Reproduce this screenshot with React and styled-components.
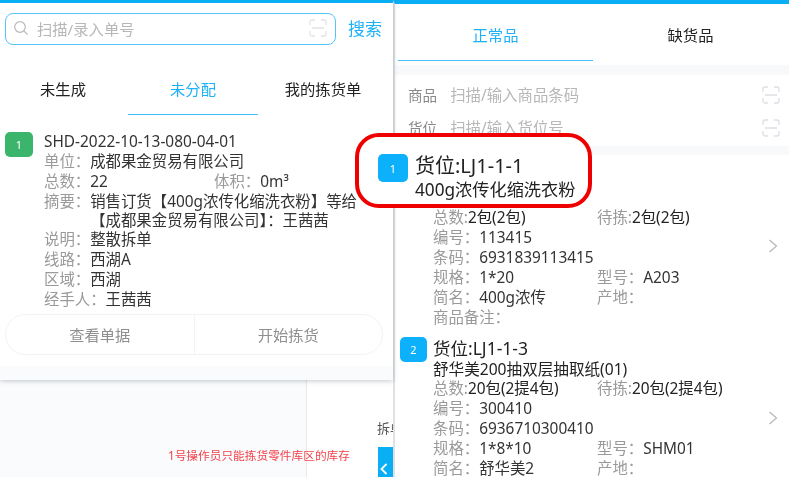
import React from "react";
import styled, { createGlobalStyle } from "styled-components";

const Global = createGlobalStyle`
  html, body { margin: 0; padding: 0; background: #fff; }
  body { font-family: "Noto Sans", "Noto Sans CJK SC", sans-serif; }
  * { box-sizing: border-box; }
`;

const Page = styled.div`
  position: relative;
  width: 789px;
  height: 477px;
  overflow: hidden;
  display: flex;
  background: #fff;
  filter: blur(0.35px);
`;
const LeftColumn = styled.div`
  width: 393px;
  flex: none;
  display: flex;
  flex-direction: column;
`;
const LeftPanel = styled.div`
  height: 380px;
  flex: none;
  display: flex;
  flex-direction: column;
  background: #fff;
  border-top: 3px solid #0aaef5;
  box-shadow: 0 1px 5px rgba(90, 100, 110, .35);
  position: relative;
  z-index: 1;
`;
const SearchBar = styled.div`
  display: flex;
  align-items: center;
  padding: 10px 0 0 5px;
  gap: 12px;
  flex: none;
`;
const SearchField = styled.div`
  width: 331px;
  height: 32px;
  border: 1.5px solid #55c4fb;
  border-radius: 8px;
  display: flex;
  align-items: center;
  padding: 0 8px 2px 7px;
  gap: 8px;
  color: #b7b7b7;
  font-size: 15.3px;
`;
const Grow = styled.span`
  flex: 1;
`;
const SearchAction = styled.span`
  color: #1fb1f8;
  font-size: 17px;
  line-height: 30px;
`;
const Tabs = styled.div`
  display: flex;
  flex: none;
  height: ${p => p.$h}px;
  margin: ${p => p.$m};
`;
const Tab = styled.div`
  flex: 0 0 ${p => p.$w}px;
  display: flex;
  align-items: center;
  justify-content: center;
  font-size: 15.3px;
  padding-top: ${p => p.$pt || 0}px;
  color: ${p => (p.$on ? "#1fb1f8" : "#222")};
  border-bottom: 1px solid ${p => (p.$on ? "#45bdf8" : "transparent")};
`;
const Order = styled.div`
  display: flex;
  flex: none;
  padding: 17px 0 0 5px;
  gap: 11px;
`;
const Badge = styled.div`
  flex: none;
  width: ${p => p.$w}px;
  height: ${p => p.$h}px;
  border-radius: 5px;
  background: ${p => p.$c};
  color: #fff;
  font-size: 11px;
  display: flex;
  align-items: center;
  justify-content: center;
`;
const OrderBody = styled.div`
  flex: 1;
`;
const Line = styled.div`
  display: flex;
  font-size: 15.4px;
  line-height: 20px;
  height: ${p => p.$tall ? "auto" : "20px"};
  color: #333;
  white-space: nowrap;
`;
const Label = styled.span`
  color: #9a9a9a;
  white-space: pre;
`;
const Cell = styled.div`
  width: ${p => p.$w}px;
  flex: none;
  white-space: pre;
`;
const Wrapped = styled.div`
  line-height: 19px;
`;
const Actions = styled.div`
  margin: 4px 10px 0 5px;
  height: 41px;
  flex: none;
  display: flex;
  border: 1px solid #f1f3f4;
  border-radius: 21px;
`;
const Action = styled.div`
  flex: 1;
  display: flex;
  align-items: center;
  justify-content: center;
  padding-bottom: 2px;
  color: #8f8f8f;
  font-size: 15.3px;
  & + & { border-left: 1px solid #f1f3f4; }
`;
const PanelBand = styled.div`
  margin-top: auto;
  height: 14px;
  background: #fafbfc;
`;
const Backdrop = styled.div`
  flex: 1;
  display: flex;
  background: #fff;
  min-height: 0;
`;
const BackdropMain = styled.div`
  width: 307px;
  flex: none;
  background: #fafbfd;
  border-right: 1px solid #e6e8ec;
`;
const BackdropSide = styled.div`
  flex: 1;
  padding: 40px 0 0 70px;
  font-size: 13px;
  line-height: 16px;
  color: #555;
  white-space: nowrap;
  overflow: hidden;
`;
const BackTab = styled.div`
  margin: 11px 0 0 1px;
  height: 30px;
  width: 16px;
  background: #0aaef5;
  padding: 15px 0 0 2px;
`;
const Note = styled.div`
  position: absolute;
  left: 168px;
  top: 448px;
  font-size: 11.7px;
  line-height: 14px;
  color: #f2444b;
  z-index: 2;
`;
const RightPanel = styled.div`
  flex: 1;
  display: flex;
  flex-direction: column;
  border-top: 4px solid #0aaef5;
  border-left: 2px solid #dfe1e4;
  position: relative;
  overflow: hidden;
  background: #fff;
`;
const Band = styled.div`
  height: ${p => p.$h}px;
  margin: ${p => p.$m};
  background: #f8f9fa;
  flex: none;
`;
const InputRow = styled.div`
  display: flex;
  flex: none;
  align-items: center;
  height: 33px;
  padding: 0 9px 0 13px;
  font-size: 15.4px;
  color: #b7b7b7;
  gap: 13px;
`;
const RowLabel = styled.span`
  color: #8a8a8a;
  font-size: 14.6px;
`;
const Goods = styled.div`
  padding: ${p => p.$pad};
  position: relative;
  display: flex;
  flex: none;
  gap: 6px;
`;
const GoodsBody = styled.div`
  flex: 1;
`;
const Title = styled.div`
  font-size: 17.5px;
  line-height: 22px;
  color: #222;
`;
const Sub = styled.div`
  font-size: 15.6px;
  line-height: 20px;
  color: #222;
`;
const Strong = styled.span`
  color: #222;
`;
const Chevron = styled.svg`
  position: absolute;
  right: 11px;
  top: ${p => p.$top}px;
`;
const Callout = styled.div`
  position: absolute;
  left: 355px;
  top: 133px;
  width: 237px;
  height: 75px;
  border: 4px solid #ef0000;
  border-radius: 24px;
  background: #fff;
  z-index: 3;
  display: flex;
  padding: 17px 0 0 19px;
  gap: 7px;
`;
const CalloutTitle = styled.div`
  font-size: 20px;
  line-height: 24px;
  color: #222;
`;
const CalloutSub = styled.div`
  font-size: 17.2px;
  line-height: 24px;
  color: #222;
  white-space: nowrap;
`;

const Search = () => (
  <svg width="16" height="16" viewBox="0 0 16 16" fill="none" stroke="#b9b9b9" strokeWidth="1.2">
    <circle cx="7" cy="7" r="5.3" />
    <path d="M11 11l3.6 3.6" />
  </svg>
);
const Scan = ({ c = "#dcdfe6" }) => (
  <svg width="18" height="18" viewBox="0 0 18 18" fill="none" stroke={c} strokeWidth="1.3">
    <path d="M1 6V3a2 2 0 0 1 2-2h3M12 1h3a2 2 0 0 1 2 2v3M17 12v3a2 2 0 0 1-2 2h-3M6 17H3a2 2 0 0 1-2-2v-3M3 9h12" />
  </svg>
);
const Arrow = ({ top }) => (
  <Chevron $top={top} width="10" height="14" viewBox="0 0 10 14" fill="none" stroke="#b5b5b5" strokeWidth="1.2">
    <path d="M1.5 1l7 6-7 6" />
  </Chevron>
);

const goods = [
  {
    n: 2, loc: "货位:LJ1-1-3", name: "舒华美200抽双层抽取纸(01)", total: "20包(2提4包)", wait: "20包(2提4包)",
    code: "300410", bar: "6936710300410", spec: "1*8*10", model: "SHM01", short: "舒华美2",
  },
];

export default function App() {
  return (
    <Page>
      <Global />
      <LeftColumn>
        <LeftPanel>
          <SearchBar>
            <SearchField>
              <Search />
              <Grow>扫描/录入单号</Grow>
              <Scan c="#e2e4e8" />
            </SearchField>
            <SearchAction>搜索</SearchAction>
          </SearchBar>
          <Tabs $h={70} $m="0 0 0 -2px">
            <Tab $w={130} $pt={16}>未生成</Tab>
            <Tab $w={130} $pt={16} $on>未分配</Tab>
            <Tab $w={130} $pt={16}>我的拣货单</Tab>
          </Tabs>
          <Order>
            <Badge $w={28} $h={25} $c="#3cb56c">1</Badge>
            <OrderBody>
              <Line>SHD-2022-10-13-080-04-01</Line>
              <Line><Label>单位：</Label>成都果金贸易有限公司</Line>
              <Line><Cell $w={170}><Label>总数：</Label>22</Cell><Label>体积：</Label>0m³</Line>
              <Line $tall>
                <Label>摘要：</Label>
                <Wrapped>
                  <div>销售订货【400g浓传化缩洗衣粉】等给</div>
                  <div>【成都果金贸易有限公司】：王茜茜</div>
                </Wrapped>
              </Line>
              <Line><Label>说明：</Label>整散拆单</Line>
              <Line><Label>线路：</Label>西湖A</Line>
              <Line><Label>区域：</Label>西湖</Line>
              <Line><Label>经手人：</Label>王茜茜</Line>
            </OrderBody>
          </Order>
          <Actions>
            <Action>查看单据</Action>
            <Action>开始拣货</Action>
          </Actions>
          <PanelBand />
        </LeftPanel>
        <Backdrop>
          <BackdropMain />
          <BackdropSide>
            拆单
            <BackTab>
              <svg width="8" height="12" viewBox="0 0 8 12" fill="none" stroke="#fff" strokeWidth="1.8">
                <path d="M6.5 1L1.5 6l5 5" />
              </svg>
            </BackTab>
          </BackdropSide>
        </Backdrop>
      </LeftColumn>
      <Note>1号操作员只能拣货零件库区的库存</Note>
      <RightPanel>
        <Tabs $h={57} $m="0 0 0 3px">
          <Tab $w={195} $pt={4} $on>正常品</Tab>
          <Tab $w={195} $pt={4}>缺货品</Tab>
        </Tabs>
        <Band $h={10} $m="4px 0 3px" />
        <InputRow><RowLabel>商品</RowLabel><Grow>扫描/输入商品条码</Grow><Scan /></InputRow>
        <InputRow><RowLabel>货位</RowLabel><Grow>扫描/输入货位号</Grow><Scan /></InputRow>
        <Band $h={9} $m="2px 0 0" />
        <Goods $pad="53px 0 0 38px">
          <GoodsBody>
            <Line><Cell $w={164}><Label>总数:</Label><Strong>2包(2包)</Strong></Cell><Label>待拣:</Label><Strong>2包(2包)</Strong></Line>
            <Line><Label>编号：</Label>113415</Line>
            <Line><Label>条码：</Label>6931839113415</Line>
            <Line><Cell $w={164}><Label>规格：</Label>1*20</Cell><Label>型号：</Label>A203</Line>
            <Line><Cell $w={164}><Label>简名：</Label>400g浓传</Cell><Label>产地：</Label></Line>
            <Line><Label>商品备注：</Label></Line>
          </GoodsBody>
          <Arrow top={84} />
        </Goods>
        {goods.map(g => (
          <Goods key={g.n} $pad="9px 0 0 5px">
            <Badge $w={27} $h={25} $c="#0db0fb">{g.n}</Badge>
            <GoodsBody>
              <Title>{g.loc}</Title>
              <Sub>{g.name}</Sub>
              <Line><Cell $w={164}><Label>总数:</Label><Strong>{g.total}</Strong></Cell><Label>待拣:</Label><Strong>{g.wait}</Strong></Line>
              <Line><Label>编号：</Label>{g.code}</Line>
              <Line><Label>条码：</Label>{g.bar}</Line>
              <Line><Cell $w={164}><Label>规格：</Label>{g.spec}</Cell><Label>型号：</Label>{g.model}</Line>
              <Line><Cell $w={164}><Label>简名：</Label>{g.short}</Cell><Label>产地：</Label></Line>
            </GoodsBody>
            <Arrow top={83} />
          </Goods>
        ))}
      </RightPanel>
      <Callout>
        <Badge $w={30} $h={28} $c="#0db0fb">1</Badge>
        <div>
          <CalloutTitle>货位:LJ1-1-1</CalloutTitle>
          <CalloutSub>400g浓传化缩洗衣粉</CalloutSub>
        </div>
      </Callout>
    </Page>
  );
}
